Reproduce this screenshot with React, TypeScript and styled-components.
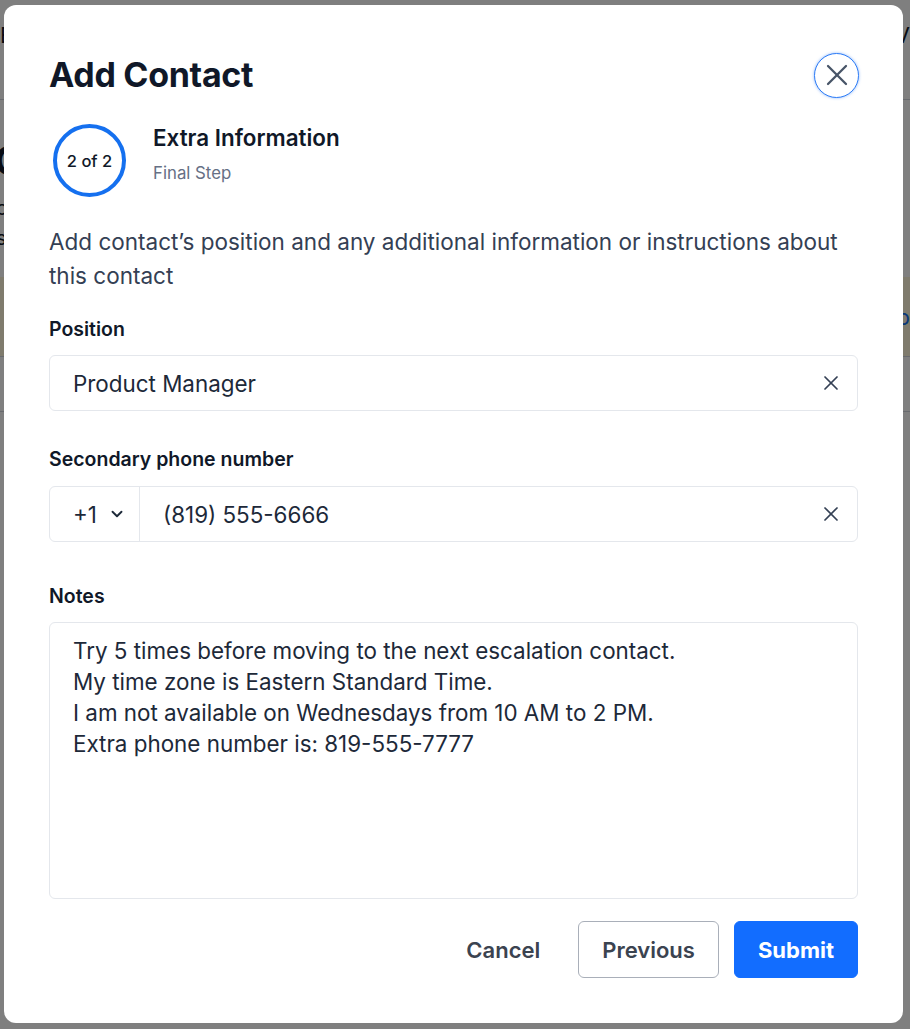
import React from 'react';
import styled, { createGlobalStyle } from 'styled-components';
import { X, ChevronDown } from 'lucide-react';

const GlobalStyle = createGlobalStyle`
    html, body {
        margin: 0;
        padding: 0;
        background: #ffffff;
        font-family: 'Inter', 'Noto Sans', sans-serif;
        -webkit-font-smoothing: antialiased;
    }
    * {
        box-sizing: border-box;
    }
`;

const Page = styled.div`
    width: 910px;
    height: 1029px;
    overflow: hidden;
    color: #101828;
`;

const PageHeader = styled.div`
    display: flex;
    justify-content: space-between;
    align-items: center;
    height: 100px;
    padding: 0 0 30px 0;
    font-size: 22px;
    border-bottom: 1px solid #d0d5dd;
`;

const PageTitle = styled.div`
    font-size: 40px;
    font-weight: 700;
    padding: 36px 0 0 0;
    margin-left: -6px;
`;

const PageText = styled.div`
    font-size: 20px;
    line-height: 30px;
    padding: 8px 0 0 0;
    margin-left: -4px;
`;

const Banner = styled.div`
    height: 80px;
    margin-top: 24px;
    background: #fff6db;
    border-bottom: 1px solid #d0d5dd;
    display: flex;
    justify-content: flex-end;
    align-items: center;
    color: #1570ef;
    font-size: 22px;
`;

const Divider = styled.div`
    height: 55px;
    border-bottom: 1px solid #d0d5dd;
`;

const Backdrop = styled.div`
    position: fixed;
    inset: 0;
    background: rgba(0, 0, 0, 0.5);
    display: flex;
    align-items: flex-start;
    justify-content: flex-start;
    padding: 5px 0 0 4px;
`;

const Modal = styled.div`
    width: 899px;
    background: #ffffff;
    border-radius: 12px;
    padding: 46px 45px 45px 45px;
    display: flex;
    flex-direction: column;
`;

const ModalHeader = styled.div`
    display: flex;
    justify-content: space-between;
    align-items: center;
    height: 48px;
`;

const Title = styled.h1`
    margin: 0;
    font-size: 34px;
    font-weight: 700;
    line-height: 48px;
    letter-spacing: -0.3px;
    color: #101828;
`;

const CloseButton = styled.button`
    width: 45px;
    height: 45px;
    border-radius: 50%;
    border: 1px solid #2e7cf6;
    box-shadow: 0 0 3px rgba(46, 124, 246, 0.55);
    background: #ffffff;
    color: #475467;
    display: flex;
    align-items: center;
    justify-content: center;
    padding: 0;
    margin-right: -1px;
    cursor: pointer;
`;

const StepRow = styled.div`
    display: flex;
    align-items: flex-start;
    gap: 27px;
    margin-top: 25px;
`;

const StepCircle = styled.div`
    width: 73px;
    height: 73px;
    border-radius: 50%;
    border: 4px solid #1570ef;
    display: flex;
    align-items: center;
    justify-content: center;
    font-size: 16.5px;
    font-weight: 500;
    color: #101828;
    margin-left: 4px;
    flex-shrink: 0;
`;

const StepInfo = styled.div`
    display: flex;
    flex-direction: column;
    padding-top: 1px;
`;

const StepTitle = styled.div`
    font-size: 22.4px;
    font-weight: 600;
    line-height: 26px;
    color: #101828;
`;

const StepSubtitle = styled.div`
    font-size: 16.8px;
    line-height: 20px;
    margin-top: 12px;
    color: #667085;
`;

const Description = styled.p`
    margin: 28px 0 0 0;
    font-size: 22.5px;
    line-height: 34px;
    color: #344054;
`;

const Label = styled.label<{ $top: number }>`
    display: block;
    margin-top: ${p => p.$top}px;
    font-size: 19.5px;
    font-weight: 600;
    line-height: 26px;
    color: #101828;
`;

const Field = styled.div<{ $top: number }>`
    margin-top: ${p => p.$top}px;
    height: 56px;
    border: 1px solid #e4e7ec;
    border-radius: 6px;
    display: flex;
    align-items: center;
`;

const FieldText = styled.span`
    flex: 1;
    padding-left: 23px;
    font-size: 22.4px;
    color: #1d2939;
`;

const ClearIcon = styled.span`
    display: flex;
    align-items: center;
    color: #344054;
    margin-right: 14px;
`;

const CountrySelect = styled.div`
    width: 90px;
    height: 100%;
    border-right: 1px solid #e4e7ec;
    display: flex;
    align-items: center;
    gap: 11px;
    padding-left: 23px;
    font-size: 22.4px;
    color: #1d2939;
`;

const NotesArea = styled.div`
    margin-top: 13px;
    height: 277px;
    border: 1px solid #e4e7ec;
    border-radius: 6px;
    padding: 12px 23px;
    font-size: 22.4px;
    line-height: 31px;
    color: #1d2939;
    white-space: pre-line;
`;

const Footer = styled.div`
    display: flex;
    justify-content: flex-end;
    align-items: center;
    gap: 15px;
    margin-top: 22px;
`;

const Button = styled.button<{ $variant: 'ghost' | 'outline' | 'primary' }>`
    height: 57px;
    padding: 0 ${p => (p.$variant === 'ghost' ? 22 : 23)}px;
    border-radius: 6px;
    font-family: 'Inter', 'Noto Sans', sans-serif;
    font-size: 22px;
    font-weight: ${p => (p.$variant === 'primary' ? 700 : 600)};
    cursor: pointer;
    border: 1px solid ${p => (p.$variant === 'outline' ? '#a9afb9' : p.$variant === 'primary' ? '#126dff' : 'transparent')};
    background: ${p => (p.$variant === 'primary' ? '#126dff' : '#ffffff')};
    color: ${p => (p.$variant === 'primary' ? '#ffffff' : '#3b4350')};
`;

const notes = `Try 5 times before moving to the next escalation contact.
My time zone is Eastern Standard Time.
I am not available on Wednesdays from 10 AM to 2 PM.
Extra phone number is: 819-555-7777`;

const App: React.FC = () => {
    return (
        <>
            <GlobalStyle />
            <Page>
                <PageHeader>
                    <span>B</span>
                    <span>V</span>
                </PageHeader>
                <PageTitle>C</PageTitle>
                <PageText>
                    o<br />s
                </PageText>
                <Banner>p</Banner>
                <Divider />
            </Page>
            <Backdrop>
                <Modal role="dialog" aria-label="Add Contact">
                    <ModalHeader>
                        <Title>Add Contact</Title>
                        <CloseButton aria-label="Close">
                            <X size={36} strokeWidth={1.5} />
                        </CloseButton>
                    </ModalHeader>

                    <StepRow>
                        <StepCircle>2 of 2</StepCircle>
                        <StepInfo>
                            <StepTitle>Extra Information</StepTitle>
                            <StepSubtitle>Final Step</StepSubtitle>
                        </StepInfo>
                    </StepRow>

                    <Description>
                        Add contact’s position and any additional information or instructions about this contact
                    </Description>

                    <Label $top={23}>Position</Label>
                    <Field $top={13}>
                        <FieldText>Product Manager</FieldText>
                        <ClearIcon>
                            <X size={24} strokeWidth={1.75} />
                        </ClearIcon>
                    </Field>

                    <Label $top={35}>Secondary phone number</Label>
                    <Field $top={14}>
                        <CountrySelect>
                            +1
                            <ChevronDown size={18} strokeWidth={2.5} />
                        </CountrySelect>
                        <FieldText>(819) 555-6666</FieldText>
                        <ClearIcon>
                            <X size={24} strokeWidth={1.75} />
                        </ClearIcon>
                    </Field>

                    <Label $top={41}>Notes</Label>
                    <NotesArea>{notes}</NotesArea>

                    <Footer>
                        <Button $variant="ghost">Cancel</Button>
                        <Button $variant="outline">Previous</Button>
                        <Button $variant="primary">Submit</Button>
                    </Footer>
                </Modal>
            </Backdrop>
        </>
    );
};

export default App;
